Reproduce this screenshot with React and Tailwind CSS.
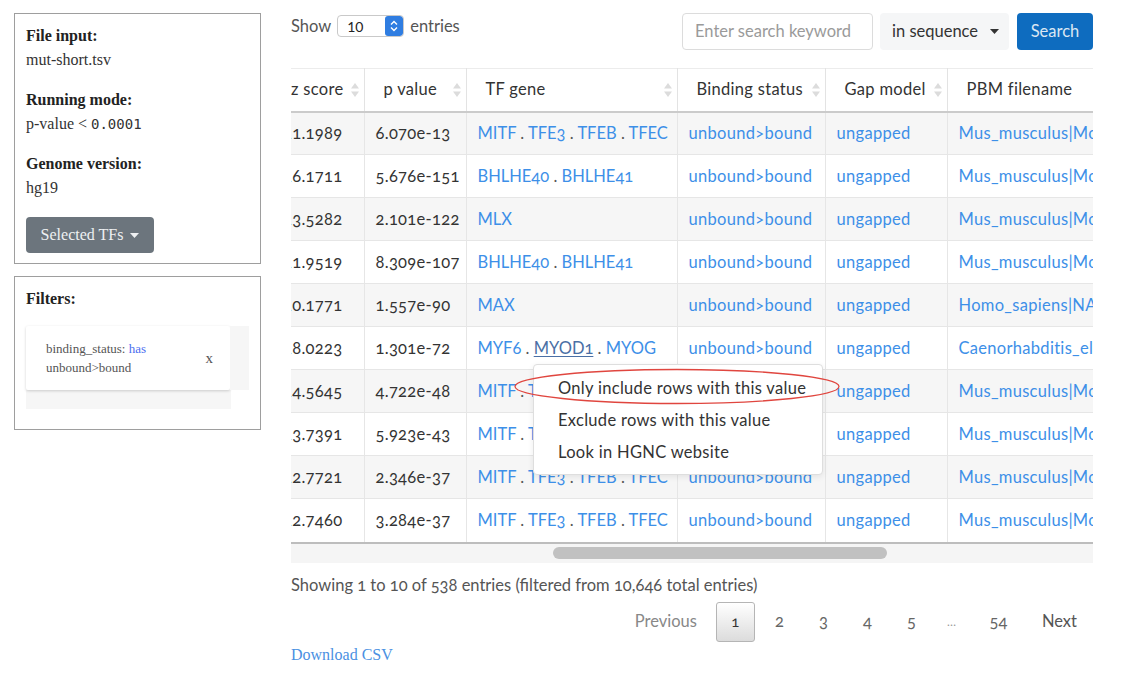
import React from 'react';

const sans = { fontFamily: 'Lato, "Open Sans", sans-serif' };

const rows = [
  { z: '11.1989', p: '6.070e-13', tf: ['MITF', 'TFE3', 'TFEB', 'TFEC'], pbm: 'Mus_musculus|Mouse_Mitf_primary' },
  { z: '16.1711', p: '5.676e-151', tf: ['BHLHE40', 'BHLHE41'], pbm: 'Mus_musculus|Mouse_Bhlhb2_primary' },
  { z: '13.5282', p: '2.101e-122', tf: ['MLX'], pbm: 'Mus_musculus|Mouse_Mlx_primary' },
  { z: '11.9519', p: '8.309e-107', tf: ['BHLHE40', 'BHLHE41'], pbm: 'Mus_musculus|Mouse_Bhlhb5_primary' },
  { z: '10.1771', p: '1.557e-90', tf: ['MAX'], pbm: 'Homo_sapiens|NA|Unpublished|Max' },
  { z: '18.0223', p: '1.301e-72', tf: ['MYF6', 'MYOD1', 'MYOG'], pbm: 'Caenorhabditis_elegans|NA|hlh-1', hover: 'MYOD1' },
  { z: '14.5645', p: '4.722e-48', tf: ['MITF', 'TFE3', 'TFEB', 'TFEC'], pbm: 'Mus_musculus|Mouse_Tcfe2a_primary' },
  { z: '13.7391', p: '5.923e-43', tf: ['MITF', 'TFE3', 'TFEB', 'TFEC'], pbm: 'Mus_musculus|Mouse_Tcfec_primary' },
  { z: '12.7721', p: '2.346e-37', tf: ['MITF', 'TFE3', 'TFEB', 'TFEC'], pbm: 'Mus_musculus|Mouse_Usf1_primary' },
  { z: '12.7460', p: '3.284e-37', tf: ['MITF', 'TFE3', 'TFEB', 'TFEC'], pbm: 'Mus_musculus|Mouse_Usf2_primary' },
];

function Caret({ className = '' }) {
  return (
    <svg width="9" height="5" viewBox="0 0 9 5" className={className}>
      <path d="M0 0h9L4.5 5z" fill="currentColor" />
    </svg>
  );
}

function SortIcon() {
  return (
    <svg width="8" height="14" viewBox="0 0 8 14" className="shrink-0">
      <path d="M4 0l4 5.5H0z" fill="#dcdcdc" />
      <path d="M4 14l4-5.5H0z" fill="#dcdcdc" />
    </svg>
  );
}

function Sidebar() {
  const serif = { fontFamily: '"Liberation Serif", serif' };
  return (
    <div className="w-[247px] shrink-0 ml-[14px] pt-[13px]" style={serif}>
      {/* Run info */}
      <div className="border border-[#9e9e9e] px-[11px] pt-[10px] pb-[10px] text-[16px] leading-[24px] text-[#333]">
        <div className="font-bold text-[#222]">File input:</div>
        <div className="mb-[16px]">mut-short.tsv</div>
        <div className="font-bold text-[#222]">Running mode:</div>
        <div className="mb-[16px]">
          p-value &lt; <span className="text-[14px]" style={{ fontFamily: '"DejaVu Sans Mono", monospace' }}>0.0001</span>
        </div>
        <div className="font-bold text-[#222]">Genome version:</div>
        <div>hg19</div>
        <button className="mt-[17px] h-[36px] w-[128px] rounded-[4px] bg-[#6c757d] text-[#eef0f2] text-[16px] flex items-center justify-center gap-[7px]">
          Selected TFs <Caret />
        </button>
      </div>

      {/* Filters */}
      <div className="mt-[12px] border border-[#9e9e9e] px-[11px] pt-[10px] pb-[20px]">
        <div className="font-bold text-[16px] leading-[24px] text-[#222]">Filters:</div>
        <div className="mt-[15px] flex">
          <div className="w-[205px] h-[64px] bg-white rounded-[2px] shadow-[0_1px_3px_rgba(0,0,0,0.18)] flex items-center justify-between pl-[20px] pr-[17px] text-[13px] leading-[19px] text-[#555]">
            <div>
              binding_status: <span className="text-[#4c6ef0]">has</span>
              <br />
              unbound&gt;bound
            </div>
            <span className="text-[15px] text-[#555]">x</span>
          </div>
          <div className="w-[19px] h-[64px] bg-[#f6f6f6]" />
        </div>
        <div className="w-[205px] h-[19px] bg-[#f6f6f6]" />
      </div>
    </div>
  );
}

function TfCell({ genes, hover }) {
  return (
    <span className="tracking-normal">
      {genes.map((g, i) => (
        <React.Fragment key={g}>
          {i > 0 && <span className="text-[#555]"> . </span>}
          <span className={g === hover ? 'text-[#4a6fa5] underline underline-offset-2' : 'text-[#3d8fe8]'}>{g}</span>
        </React.Fragment>
      ))}
    </span>
  );
}

function DataTable() {
  const th = 'h-[43px] border-r border-[#e3e3e3] font-normal text-left';
  const td = 'h-[43px] border-r border-t border-[#e6e6e6] pl-[11px] whitespace-nowrap';
  return (
    <div className="mt-[18px] w-[802px] overflow-hidden">
      <table className="table-fixed border-collapse ml-[-19px] w-[975px] text-[16.5px] tracking-[0.3px] text-[#333] oldstyle-nums">
        <colgroup>
          <col className="w-[92px]" />
          <col className="w-[102px]" />
          <col className="w-[211px]" />
          <col className="w-[148px]" />
          <col className="w-[122px]" />
          <col className="w-[300px]" />
        </colgroup>
        <thead>
          <tr className="border-t border-[#ececec] border-b-2 border-b-[#cbcbcb]">
            {['z score', 'p value', 'TF gene', 'Binding status', 'Gap model'].map((h) => (
              <th key={h} className={th}>
                <div className="flex items-center justify-between pl-[19px] pr-[5px]">
                  <span>{h}</span>
                  <SortIcon />
                </div>
              </th>
            ))}
            <th className="h-[43px] font-normal text-left pl-[19px]">PBM filename</th>
          </tr>
        </thead>
        <tbody>
          {rows.map((r, i) => (
            <tr key={i} className={i % 2 === 0 ? 'bg-[#f6f6f6]' : 'bg-white'}>
              <td className={td}>{r.z}</td>
              <td className={td}>{r.p}</td>
              <td className={td}>
                <TfCell genes={r.tf} hover={r.hover} />
              </td>
              <td className={`${td} text-[#3d8fe8]`}>unbound&gt;bound</td>
              <td className={`${td} text-[#3d8fe8]`}>ungapped</td>
              <td className="h-[43px] border-t border-[#e6e6e6] pl-[11px] whitespace-nowrap text-[#3d8fe8]">{r.pbm}</td>
            </tr>
          ))}
        </tbody>
      </table>
      {/* horizontal scrollbar */}
      <div className="border-t-2 border-[#bdbdbd] h-[21px] bg-[#f5f5f5] flex items-center pl-[262px]">
        <div className="w-[334px] h-[12px] rounded-full bg-[#c1c1c1]" />
      </div>
    </div>
  );
}

function Pagination() {
  const pages = ['2', '3', '4', '5'];
  return (
    <div className="mt-[5px] flex justify-end items-center h-[40px] text-[16.5px] text-[#666] oldstyle-nums">
      <span className="px-[10px] text-[#888]">Previous</span>
      <span className="ml-[9px] w-[39px] h-[40px] flex items-center justify-center rounded-[3px] border border-[#b5b5b5] bg-gradient-to-b from-white to-[#dcdcdc] text-[#333] text-[15px]">1</span>
      {pages.map((p) => (
        <span key={p} className="ml-[5px] w-[39px] text-center">{p}</span>
      ))}
      <span className="ml-[1px] w-[39px] text-center text-[12px] text-[#999]">…</span>
      <span className="ml-[5px] w-[45px] text-center">54</span>
      <span className="pl-[21px] pr-[16px] text-[#555]">Next</span>
    </div>
  );
}

export default function App() {
  return (
    <div className="w-[1138px] h-[674px] bg-white flex overflow-hidden" style={sans}>
      <Sidebar />

      <div className="relative ml-[30px] w-[802px] pt-[13px]">
        {/* top controls */}
        <div className="flex justify-between items-start">
          <div className="mt-[1px] flex items-center gap-[6px] text-[16.5px] text-[#555]">
            <span>Show</span>
            <div className="w-[67px] h-[22px] border border-[#c9c9c9] rounded-[4px] flex items-center justify-between bg-white overflow-hidden">
              <span className="pl-[9px] text-[14px] text-[#222]">10</span>
              <div className="w-[18px] h-full bg-[#2f7de1] rounded-[3px] flex items-center justify-center">
                <svg width="8" height="12" viewBox="0 0 8 12">
                  <path d="M1 4.5L4 1.5l3 3M1 7.5l3 3 3-3" stroke="white" strokeWidth="1.4" fill="none" />
                </svg>
              </div>
            </div>
            <span>entries</span>
          </div>
          <div className="flex items-center">
            <div className="w-[191px] h-[37px] border border-[#dcdcdc] rounded-[4px] flex items-center pl-[12px] text-[16.5px] text-[#9a9a9a]">
              Enter search keyword
            </div>
            <div className="ml-[7px] w-[129px] h-[37px] rounded-[4px] bg-[#f5f6f7] flex items-center justify-between pl-[12px] pr-[10px] text-[16.5px] text-[#333]">
              in sequence <Caret className="text-[#333]" />
            </div>
            <div className="ml-[8px] w-[76px] h-[37px] rounded-[4px] bg-[#0e6cbf] flex items-center justify-center text-[16.5px] text-[#dbe7f3]">
              Search
            </div>
          </div>
        </div>

        <DataTable />

        <div className="mt-[10px] text-[16.5px] leading-[24px] text-[#555] oldstyle-nums">
          Showing 1 to 10 of 538 entries (filtered from 10,646 total entries)
        </div>
        <Pagination />
        <div className="mt-[4px] text-[16px] leading-[18px] text-[#4a90e2]" style={{ fontFamily: '"Liberation Serif", serif' }}>
          Download CSV
        </div>

        {/* context menu on hovered gene */}
        <div className="absolute left-[242px] top-[364px] w-[290px] h-[111px] bg-white border border-[#dedede] rounded-[4px] shadow-[0_2px_6px_rgba(0,0,0,0.08)] pt-[7px] text-[16.5px] tracking-[0.3px] text-[#333]">
          <div className="h-[32px] leading-[32px] pl-[24px]">Only include rows with this value</div>
          <div className="h-[32px] leading-[32px] pl-[24px]">Exclude rows with this value</div>
          <div className="h-[32px] leading-[32px] pl-[24px]">Look in HGNC website</div>
        </div>
        <svg className="absolute left-[221px] top-[367px]" width="330" height="40" viewBox="0 0 330 40">
          <ellipse cx="165" cy="19.5" rx="162" ry="17" fill="none" stroke="#e0463f" strokeWidth="1.3" />
        </svg>
      </div>
    </div>
  );
}
